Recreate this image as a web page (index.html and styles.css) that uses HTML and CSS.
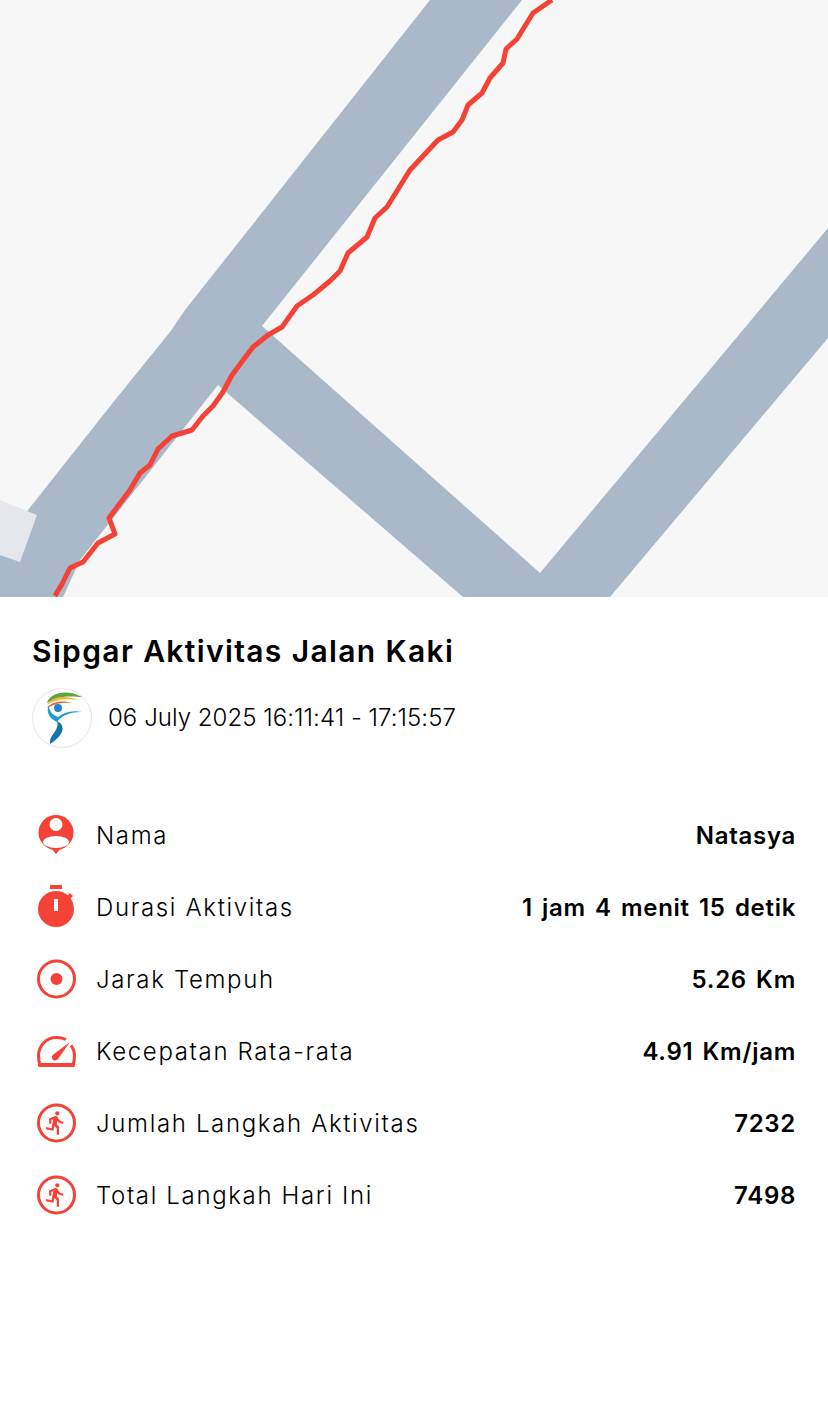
FILE: index.html
```html
<!DOCTYPE html>
<html lang="id">
<head>
<meta charset="utf-8">
<title>Sipgar Aktivitas Jalan Kaki</title>
<link rel="stylesheet" href="styles.css">
</head>
<body>
<div class="map">
  <svg class="map-svg" viewBox="0 0 828 597" width="828" height="597">
    <rect class="land" width="828" height="597"/>
    <path class="road" d="M430 0H522L262 326 540 573 828 228V338L610 597H463L218 385 80 560 63 597H0V545L28 510 115 400 170 332 185 310Z"/>
    <path class="patch" d="M0 500L37 515 20 562 0 555Z"/>
    <path class="route" d="M55 596L62 584 70 568 83 562 98 543 115 534 109 518 130 490 140 473 150 465 158 449 172 436 192 430 203 416 213 406 223 392 232 375 253 347 268 335 282 327 297 306 313 295 330 281 340 271 348 253 367 237 375 218 387 207 410 170 438 140 453 132 462 120 468 105 482 93 490 78 503 63 506 49 517 39 533 13 552 0"/>
  </svg>
</div>
<main class="panel">
  <h1 class="title">Sipgar Aktivitas Jalan Kaki</h1>
  <div class="meta">
    <svg class="logo" viewBox="0 0 60 60" width="60" height="60">
      <circle cx="30" cy="30" r="29.500" fill="#fff" stroke="#e6e6e6"/>
      <path fill="#5aa83c" d="M15 15C18 4 36 1 50 9 42 9 28 6 15 15Z"/>
      <path fill="#f2b632" d="M15 17C20 8 34 7 46 12 36 11 25 10 15 17Z"/>
      <path fill="#e8663a" d="M15 20C19 13 32 12 41 15 32 14 23 15 15 20Z"/>
      <circle cx="26" cy="20" r="4" fill="#1e88c9"/>
      <path fill="#1b9bd0" d="M17 17C13 25 19 31 25 34 30 27 38 24 50 24 40 22 33 24 26 29 21 27 17 24 17 17Z"/>
      <path fill="#1476a8" d="M25 33C35 38 31 48 18 56 17 46 28 43 25 33Z"/>
    </svg>
    <p class="date">06 July 2025 16:11:41 - 17:15:57</p>
  </div>
  <ul class="stats">
    <li class="row">
      <svg class="icon" viewBox="0 -1 48 48" width="48" height="48"><circle cx="24" cy="20.500" r="17.500" fill="#f44336"/><path fill="#f44336" d="M19 36H29L24 42Z"/><circle cx="24" cy="12.500" r="6.500" fill="#fff"/><ellipse cx="24" cy="30" rx="13" ry="6" fill="#fff"/></svg>
      <span class="label">Nama</span><span class="value">Natasya</span>
    </li>
    <li class="row">
      <svg class="icon" viewBox="0 -1 48 48" width="48" height="48"><rect x="18" y="1" width="12" height="4" fill="#f44336"/><circle cx="24" cy="25" r="18" fill="#f44336"/><path fill="#f44336" d="M35 12 38 9 41 12 38 15Z"/><rect x="22" y="15" width="4" height="12" fill="#fff"/></svg>
      <span class="label">Durasi Aktivitas</span><span class="value">1 jam 4 menit 15 detik</span>
    </li>
    <li class="row">
      <svg class="icon" viewBox="0 0 48 48" width="48" height="48"><circle cx="24.500" cy="24" r="18" fill="none" stroke="#f44336" stroke-width="3"/><circle cx="24.500" cy="24" r="6" fill="#f44336"/></svg>
      <span class="label">Jarak Tempuh</span><span class="value">5.26 Km</span>
    </li>
    <li class="row">
      <svg class="icon" viewBox="0 -1 48 48" width="48" height="48"><path fill="none" stroke="#f44336" stroke-width="3" stroke-linejoin="round" d="M34 11.500C31 10 28 9.500 24.500 9.500 14 9.500 6.500 18 6.500 28 6.500 31 7 34 8 37.500H41C42 34 42.500 31 42.500 28 42.500 24 41 20 39 17.500"/><rect x="6" y="35" width="37" height="4" rx="2" fill="#f44336"/><path fill="#f44336" d="M38 14 26 31C24 33 21.500 33 20.500 31 19 29 20 27 22 26Z"/></svg>
      <span class="label">Kecepatan Rata-rata</span><span class="value">4.91 Km/jam</span>
    </li>
    <li class="row">
      <svg class="icon" viewBox="0 0 48 48" width="48" height="48"><circle cx="24.500" cy="24" r="18" fill="none" stroke="#f44336" stroke-width="3"/><path fill="#f44336" transform="translate(10.500 10.500) scale(1.1)" d="M13.490 5.480c1.100 0 2-.9 2-2s-.9-2-2-2-2 .9-2 2 .9 2 2 2zm-3.600 13.900l1-4.400 2.100 2v6h2v-7.500l-2.100-2 .6-3c1.300 1.500 3.300 2.500 5.500 2.500v-2c-1.900 0-3.500-1-4.300-2.400l-1-1.600c-.4-.6-1-1-1.700-1-.3 0-.5.100-.8.100l-5.200 2.200v4.700h2v-3.400l1.800-.7-1.600 8.100-4.900-1-.4 2 7 1.400z"/></svg>
      <span class="label">Jumlah Langkah Aktivitas</span><span class="value">7232</span>
    </li>
    <li class="row">
      <svg class="icon" viewBox="0 0 48 48" width="48" height="48"><circle cx="24.500" cy="24" r="18" fill="none" stroke="#f44336" stroke-width="3"/><path fill="#f44336" transform="translate(10.500 10.500) scale(1.1)" d="M13.490 5.480c1.100 0 2-.9 2-2s-.9-2-2-2-2 .9-2 2 .9 2 2 2zm-3.600 13.900l1-4.400 2.100 2v6h2v-7.500l-2.100-2 .6-3c1.300 1.500 3.300 2.500 5.500 2.500v-2c-1.900 0-3.500-1-4.300-2.400l-1-1.600c-.4-.6-1-1-1.700-1-.3 0-.5.100-.8.100l-5.200 2.200v4.700h2v-3.400l1.800-.7-1.600 8.100-4.900-1-.4 2 7 1.400z"/></svg>
      <span class="label">Total Langkah Hari Ini</span><span class="value">7498</span>
    </li>
  </ul>
</main>
</body>
</html>
```
FILE: styles.css
```css
* { box-sizing: border-box; }
html, body { margin: 0; padding: 0; background: #fff; }
body {
  width: 828px;
  height: 1424px;
  overflow: hidden;
  font-family: "Inter", "Liberation Sans", sans-serif;
  color: #000;
}
.map { height: 597px; }
.map-svg { display: block; }
.land { fill: #f7f7f7; }
.road { fill: #a9b9ca; }
.patch { fill: #e5e7ec; }
.route {
  fill: none;
  stroke: #f44336;
  stroke-width: 5;
  stroke-linejoin: round;
}
.panel { padding: 32px 32px 0; }
.title {
  margin: 0;
  font-size: 30px;
  line-height: 44px;
  font-weight: 600;
  letter-spacing: 1.37px;
}
.meta {
  display: flex;
  align-items: center;
  gap: 16px;
  margin-top: 15px;
}
.logo { display: block; flex: none; }
.date {
  margin: 0;
  font-size: 24px;
  line-height: 32px;
  font-weight: 300;
  letter-spacing: 0.04px;
}
.stats {
  list-style: none;
  margin: 51px 0 0;
  padding: 0;
}
.row {
  display: flex;
  align-items: center;
  height: 72px;
  font-size: 24px;
}
.icon { display: block; flex: none; margin-right: 16px; }
.label {
  font-weight: 300;
  letter-spacing: 1.65px;
}
.value {
  margin-left: auto;
  font-weight: 600;
  letter-spacing: 0.7px;
  word-spacing: 2.5px;
}
```
